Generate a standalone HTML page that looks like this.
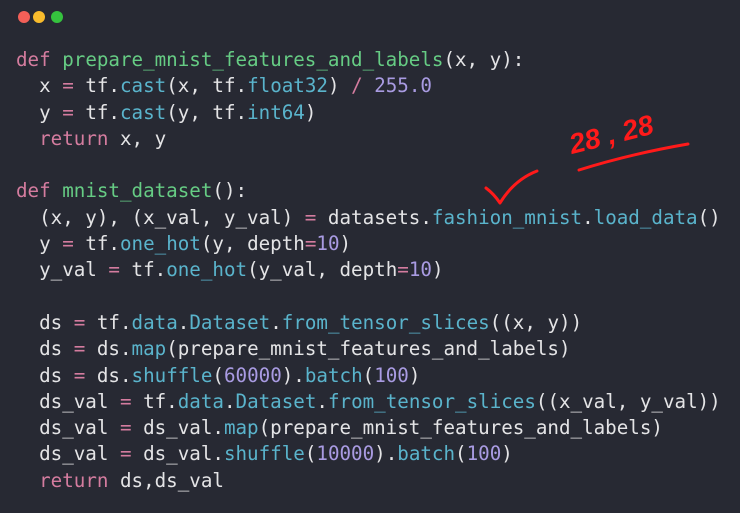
<!DOCTYPE html>
<html><head><meta charset="utf-8"><style>
html,body{margin:0;padding:0;background:#272933;width:740px;height:513px;overflow:hidden}
.d{position:absolute;top:11px;width:12px;height:12px;border-radius:50%}
pre{position:absolute;left:16px;top:47px;margin:0;font-family:"DejaVu Sans Mono","Liberation Mono",monospace;font-size:19.2px;line-height:26.3px;color:#e4e4e6}
.k{color:#d47c9f}.g{color:#66cc84}.c{color:#5ab4cc}.n{color:#a99be2}
</style></head><body>
<div class="d" style="left:18px;background:#f25f58"></div>
<div class="d" style="left:33px;background:#f8bb2c"></div>
<div class="d" style="left:51px;background:#35c23e"></div>
<pre><span class="k">def</span> <span class="g">prepare_mnist_features_and_labels</span>(x, y):
  x <span class="k">=</span> tf.<span class="c">cast</span>(x, tf.<span class="c">float32</span>) <span class="k">/</span> <span class="n">255.0</span>
  y <span class="k">=</span> tf.<span class="c">cast</span>(y, tf.<span class="c">int64</span>)
  <span class="k">return</span> x, y

<span class="k">def</span> <span class="g">mnist_dataset</span>():
  (x, y), (x_val, y_val) <span class="k">=</span> datasets.<span class="c">fashion_mnist</span>.<span class="c">load_data</span>()
  y <span class="k">=</span> tf.<span class="c">one_hot</span>(y, depth<span class="k">=</span><span class="n">10</span>)
  y_val <span class="k">=</span> tf.<span class="c">one_hot</span>(y_val, depth<span class="k">=</span><span class="n">10</span>)

  ds <span class="k">=</span> tf.<span class="c">data</span>.<span class="c">Dataset</span>.<span class="c">from_tensor_slices</span>((x, y))
  ds <span class="k">=</span> ds.<span class="c">map</span>(prepare_mnist_features_and_labels)
  ds <span class="k">=</span> ds.<span class="c">shuffle</span>(<span class="n">60000</span>).<span class="c">batch</span>(<span class="n">100</span>)
  ds_val <span class="k">=</span> tf.<span class="c">data</span>.<span class="c">Dataset</span>.<span class="c">from_tensor_slices</span>((x_val, y_val))
  ds_val <span class="k">=</span> ds_val.<span class="c">map</span>(prepare_mnist_features_and_labels)
  ds_val <span class="k">=</span> ds_val.<span class="c">shuffle</span>(<span class="n">10000</span>).<span class="c">batch</span>(<span class="n">100</span>)
  <span class="k">return</span> ds,ds_val</pre>
<svg width="740" height="513" style="position:absolute;left:0;top:0" fill="none" stroke="#ff1a1a" stroke-width="3" stroke-linecap="round" stroke-linejoin="round">
<path d="M486 188 Q494 194 500 203 Q514 180 537 171"/>
<path d="M579 170 Q630 154 688 144"/>
<text x="572" y="154" transform="rotate(-14 572 154)" fill="#ff1a1a" stroke="none" font-family="Liberation Sans, sans-serif" font-style="italic" font-weight="bold" font-size="28">28 , 28</text>
</svg>
</body></html>
